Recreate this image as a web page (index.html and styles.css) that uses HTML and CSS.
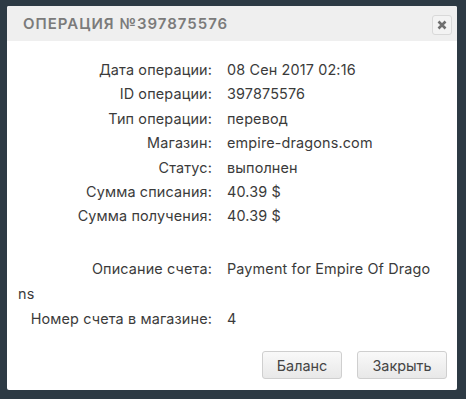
FILE: index.html
```html
<!DOCTYPE html>
<html lang="ru">
<head>
<meta charset="utf-8">
<link rel="stylesheet" href="styles.css">
</head>
<body>
<div class="modal">
  <div class="modal-header">
    <h1 class="modal-title">Операция №397875576</h1>
    <button class="close-btn" aria-label="Закрыть">
      <svg width="10" height="10" viewBox="0 0 10 10"><path d="M1.5 1.5 L8.5 8.5 M8.5 1.5 L1.5 8.5" stroke="#6f6f6f" stroke-width="2.6" stroke-linecap="butt"/></svg>
    </button>
  </div>
  <div class="modal-body">
    <div class="row"><span class="label">Дата операции:</span>08 Сен 2017 02:16</div>
    <div class="row"><span class="label">ID операции:</span>397875576</div>
    <div class="row"><span class="label">Тип операции:</span>перевод</div>
    <div class="row"><span class="label">Магазин:</span>empire-dragons.com</div>
    <div class="row"><span class="label">Статус:</span>выполнен</div>
    <div class="row"><span class="label">Сумма списания:</span>40.39 $</div>
    <div class="row"><span class="label">Сумма получения:</span>40.39 $</div>
    <div class="row spacer"></div>
    <div class="row desc"><span class="label">Описание счета:</span>Payment for Empire Of Dragons</div>
    <div class="row"><span class="label">Номер счета в магазине:</span>4</div>
  </div>
  <div class="modal-footer">
    <button class="btn btn-balance">Баланс</button>
    <button class="btn btn-close">Закрыть</button>
  </div>
</div>
</body>
</html>
```

FILE: styles.css
```css
html, body {
  margin: 0;
  padding: 0;
}
body {
  background: #2d3a44;
  width: 466px;
  height: 399px;
  overflow: hidden;
  font-family: "Inter", "Noto Sans", sans-serif;
  padding: 6px 9px 0 7px;
  box-sizing: border-box;
}
.modal {
  width: 450px;
  height: 384px;
  background: #fff;
  border-radius: 2px;
  display: flex;
  flex-direction: column;
  overflow: hidden;
}
.modal-header {
  height: 35px;
  background: #efefef;
  display: flex;
  align-items: center;
  justify-content: space-between;
  padding: 0 5px 0 16px;
  flex: none;
}
.modal-title {
  margin: 0;
  font-size: 15px;
  font-weight: 600;
  letter-spacing: 1px;
  text-transform: uppercase;
  color: #7b7b7b;
}
.close-btn {
  width: 20px;
  height: 20px;
  padding: 0;
  border: 1px solid #d9d9d9;
  border-radius: 3px;
  background: #f3f3f3;
  display: flex;
  align-items: center;
  justify-content: center;
  margin-top: 2px;
}
.modal-body {
  padding: 17px 21px 0 11px;
  font-size: 14.4px;
  letter-spacing: 0.15px;
  color: #3b3b3b;
  word-break: break-all;
  flex: 1;
}
.row {
  line-height: 24.4px;
}
.spacer {
  height: 27px;
}
.label {
  display: inline-block;
  width: 194px;
  margin-right: 15px;
  text-align: right;
  word-break: normal;
}
.desc {
  line-height: 25.5px;
}
.modal-footer {
  display: flex;
  justify-content: flex-end;
  gap: 15px;
  padding: 0 10px 11px 0;
  flex: none;
}
.btn {
  height: 28px;
  border: 1px solid #cfcfcf;
  border-radius: 3px;
  background: linear-gradient(#f9f9f9, #e8e8e8);
  font-family: "Inter", "Noto Sans", sans-serif;
  font-size: 14.4px;
  color: #454545;
  padding: 0;
}
.btn-balance { width: 80px; }
.btn-close { width: 90px; }
```
